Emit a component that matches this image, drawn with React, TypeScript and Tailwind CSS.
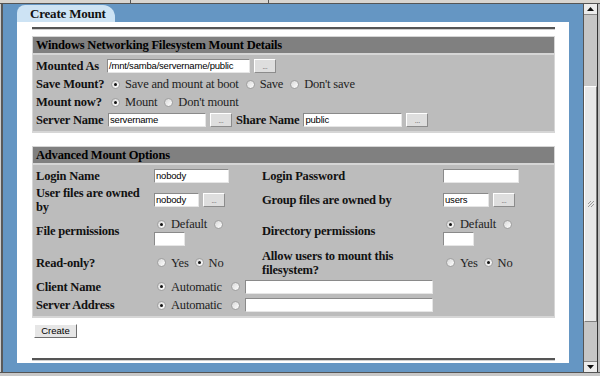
import React from "react";

const serif = { fontFamily: '"Liberation Serif", "Times New Roman", serif' };

function Radio({ on = false }: { on?: boolean }) {
  return (
    <span className="relative inline-flex h-[9px] w-[9px] shrink-0 items-center justify-center rounded-full border border-[#a0a0a0] bg-gradient-to-br from-[#d8d8d8] to-white">
      {on && <span className="h-[3px] w-[3px] rounded-full bg-[#111]" />}
    </span>
  );
}

function Choice({ on, label, className = "" }: { on?: boolean; label: string; className?: string }) {
  return (
    <span className={`inline-flex items-center gap-[5px] ${className}`}>
      <Radio on={on} />
      {label && <span className="text-[#222]">{label}</span>}
    </span>
  );
}

function Field({ value = "", w }: { value?: string; w: string }) {
  return (
    <div
      className={`${w} h-[14px] shrink-0 overflow-hidden whitespace-nowrap border border-[#8a8a8a] border-b-[#e6e6e6] border-r-[#e6e6e6] bg-white pl-[1px] text-[9.5px] leading-[12px] text-black`}
      style={{ fontFamily: '"Liberation Sans", Arial, sans-serif' }}
    >
      {value}
    </div>
  );
}

function Dots() {
  return (
    <div
      className="flex h-[14px] w-[22px] shrink-0 items-end justify-center border border-white border-b-[#8c8c8c] border-r-[#8c8c8c] bg-[#dedede] pb-[2px] text-[7px] leading-none text-[#555]"
      style={{ fontFamily: '"Liberation Sans", Arial, sans-serif' }}
    >
      ...
    </div>
  );
}

function Panel({ title, children }: { title: string; children: React.ReactNode }) {
  return (
    <div className="flex flex-col gap-[2px] bg-[#d6d6d6] p-[1px] pb-[2px]">
      <div className="flex h-[16px] items-center bg-[#808080] pl-[3px] font-bold text-black">{title}</div>
      <div className="bg-[#bcbcbc]">{children}</div>
    </div>
  );
}

function Row1({ label, children }: { label: string; children: React.ReactNode }) {
  return (
    <div className="flex h-[18px] items-center">
      <div className="w-[73px] shrink-0 pl-[3px] font-bold">{label}</div>
      <div className="flex items-center">{children}</div>
    </div>
  );
}

export default function App() {
  return (
    <div
      className="flex h-[376px] w-[600px] flex-col overflow-hidden bg-[#c4c4c4] text-[12.5px] tracking-[-0.2px] text-[#111]"
      style={serif}
    >
      {/* browser chrome remnant */}
      <div className="relative h-[4px] shrink-0 border-b border-[#555] bg-[#d8d5d0]">
        <div className="absolute left-[130px] top-0 h-full w-[1px] bg-[#555]" />
        <div className="absolute left-[268px] top-0 h-full w-[1px] bg-[#555]" />
      </div>

      <div className="flex min-h-0 flex-1">
        <div className="w-[3px] shrink-0 border-l border-[#cfcfcf] bg-[#5a5a5a]" />

        <div className="flex w-[580px] shrink-0 flex-col bg-[#6596c3] pl-[14px] pt-[1px]">
          {/* tab */}
          <div className="flex h-[17px] w-[98px] items-center rounded-tl-[8px] rounded-tr-[12px] bg-[#cde3f4] pl-[13px] text-[13px] font-bold">
            Create Mount
          </div>

          {/* white page */}
          <div className="flex h-[341px] w-[552px] flex-col bg-white pl-[15px] pr-[14px] pt-[5px]">
            <div className="h-[3px] border-t-2 border-b border-t-[#555] border-b-[#cfcfcf]" />

            <div className="mt-[6px]">
              <Panel title="Windows Networking Filesystem Mount Details">
                <div className="flex flex-col py-[2px]">
                  <Row1 label="Mounted As">
                    <div className="ml-[1px] flex items-center gap-[4px]">
                      <Field w="w-[143px]" value="/mnt/samba/servername/public" />
                      <Dots />
                    </div>
                  </Row1>
                  <Row1 label="Save Mount?">
                    <div className="ml-[5px] flex items-center gap-[7px]">
                      <Choice on label="Save and mount at boot" />
                      <Choice label="Save" />
                      <Choice label="Don't save" />
                    </div>
                  </Row1>
                  <Row1 label="Mount now?">
                    <div className="ml-[5px] flex items-center gap-[7px]">
                      <Choice on label="Mount" />
                      <Choice label="Don't mount" />
                    </div>
                  </Row1>
                  <Row1 label="Server Name">
                    <div className="ml-[2px] flex items-center gap-[4px]">
                      <Field w="w-[98px]" value="servername" />
                      <Dots />
                      <span className="font-bold">Share Name</span>
                      <Field w="w-[99px]" value="public" />
                      <Dots />
                    </div>
                  </Row1>
                </div>
              </Panel>
            </div>

            <div className="mt-[13px]">
              <Panel title="Advanced Mount Options">
                <div className="grid grid-cols-[118px_108px_181px_1fr] pb-[2px] leading-[14px] [&>div]:flex [&>div]:items-center [&>div]:pl-[3px]">
                  {/* Login */}
                  <div className="h-[21px] font-bold">Login Name</div>
                  <div>
                    <Field w="w-[75px]" value="nobody" />
                  </div>
                  <div className="font-bold">Login Password</div>
                  <div>
                    <Field w="w-[76px]" />
                  </div>

                  {/* owners */}
                  <div className="h-[28px] font-bold">
                    User files are owned
                    <br />
                    by
                  </div>
                  <div className="gap-[4px]">
                    <Field w="w-[45px]" value="nobody" />
                    <Dots />
                  </div>
                  <div className="font-bold">Group files are owned by</div>
                  <div className="gap-[4px]">
                    <Field w="w-[46px]" value="users" />
                    <Dots />
                  </div>

                  {/* permissions */}
                  <div className="h-[34px] font-bold">File permissions</div>
                  <div className="flex-col !items-start justify-center">
                    <div className="ml-[3px] flex h-[15px] items-center gap-[7px]">
                      <Choice on label="Default" />
                      <Choice label="" />
                    </div>
                    <Field w="w-[31px]" />
                  </div>
                  <div className="font-bold">Directory permissions</div>
                  <div className="flex-col !items-start justify-center">
                    <div className="ml-[3px] flex h-[15px] items-center gap-[7px]">
                      <Choice on label="Default" />
                      <Choice label="" />
                    </div>
                    <Field w="w-[31px]" />
                  </div>

                  {/* read only */}
                  <div className="h-[29px] font-bold">Read-only?</div>
                  <div>
                    <div className="ml-[3px] flex items-center gap-[6px]">
                      <Choice label="Yes" />
                      <Choice on label="No" />
                    </div>
                  </div>
                  <div className="font-bold">
                    Allow users to mount this
                    <br />
                    filesystem?
                  </div>
                  <div>
                    <div className="ml-[3px] flex items-center gap-[6px]">
                      <Choice label="Yes" />
                      <Choice on label="No" />
                    </div>
                  </div>

                  {/* client */}
                  <div className="h-[19px] font-bold">Client Name</div>
                  <div className="col-span-2">
                    <div className="ml-[3px] flex items-center gap-[9px]">
                      <Choice on label="Automatic" />
                      <Radio />
                    </div>
                    <div className="ml-[5px]">
                      <Field w="w-[188px]" />
                    </div>
                  </div>
                  <div />

                  {/* server */}
                  <div className="h-[18px] font-bold">Server Address</div>
                  <div className="col-span-2">
                    <div className="ml-[3px] flex items-center gap-[9px]">
                      <Choice on label="Automatic" />
                      <Radio />
                    </div>
                    <div className="ml-[5px]">
                      <Field w="w-[188px]" />
                    </div>
                  </div>
                  <div />
                </div>
              </Panel>
            </div>

            <div className="mt-[6px] pl-[2px]">
              <div
                className="flex h-[14px] w-[43px] items-center justify-center border border-white border-b-[#6e6e6e] border-r-[#6e6e6e] bg-[#e6e6e6] text-[9.5px] tracking-normal text-black"
                style={{ fontFamily: '"Liberation Sans", Arial, sans-serif' }}
              >
                Create
              </div>
            </div>

            <div className="mt-[20px] h-[3px] border-t-2 border-b border-t-[#555] border-b-[#cfcfcf]" />
          </div>
        </div>

        {/* scrollbar */}
        <div className="flex w-[14px] shrink-0 flex-col border-l border-[#555] bg-[#c6c6c6]">
          <div className="flex h-[11px] shrink-0 items-center justify-center border-b border-[#888] bg-[#ececec]">
            <svg width="7" height="4" viewBox="0 0 7 4">
              <path d="M0 4 L3.5 0 L7 4 Z" fill="#111" />
            </svg>
          </div>
          <div className="h-[71px] shrink-0" />
          <div className="flex h-[236px] shrink-0 items-center justify-center border border-[#808080] border-l-white border-t-white bg-[#e8e8e8]">
            <svg width="8" height="8" viewBox="0 0 8 8">
              <path d="M1 7 L7 1 M1 4 L4 1 M4 7 L7 4" stroke="#999" strokeWidth="1" />
            </svg>
          </div>
          <div className="flex-1" />
          <div className="flex h-[11px] shrink-0 items-center justify-center border-t border-[#888] bg-[#ececec]">
            <svg width="7" height="4" viewBox="0 0 7 4">
              <path d="M0 0 L3.5 4 L7 0 Z" fill="#111" />
            </svg>
          </div>
        </div>

        <div className="w-[3px] shrink-0 border-l border-[#333] bg-[#bdbdbd]" />
      </div>

      <div className="h-[4px] shrink-0 border-t border-[#555] bg-[#c8c8c8]" />
    </div>
  );
}
